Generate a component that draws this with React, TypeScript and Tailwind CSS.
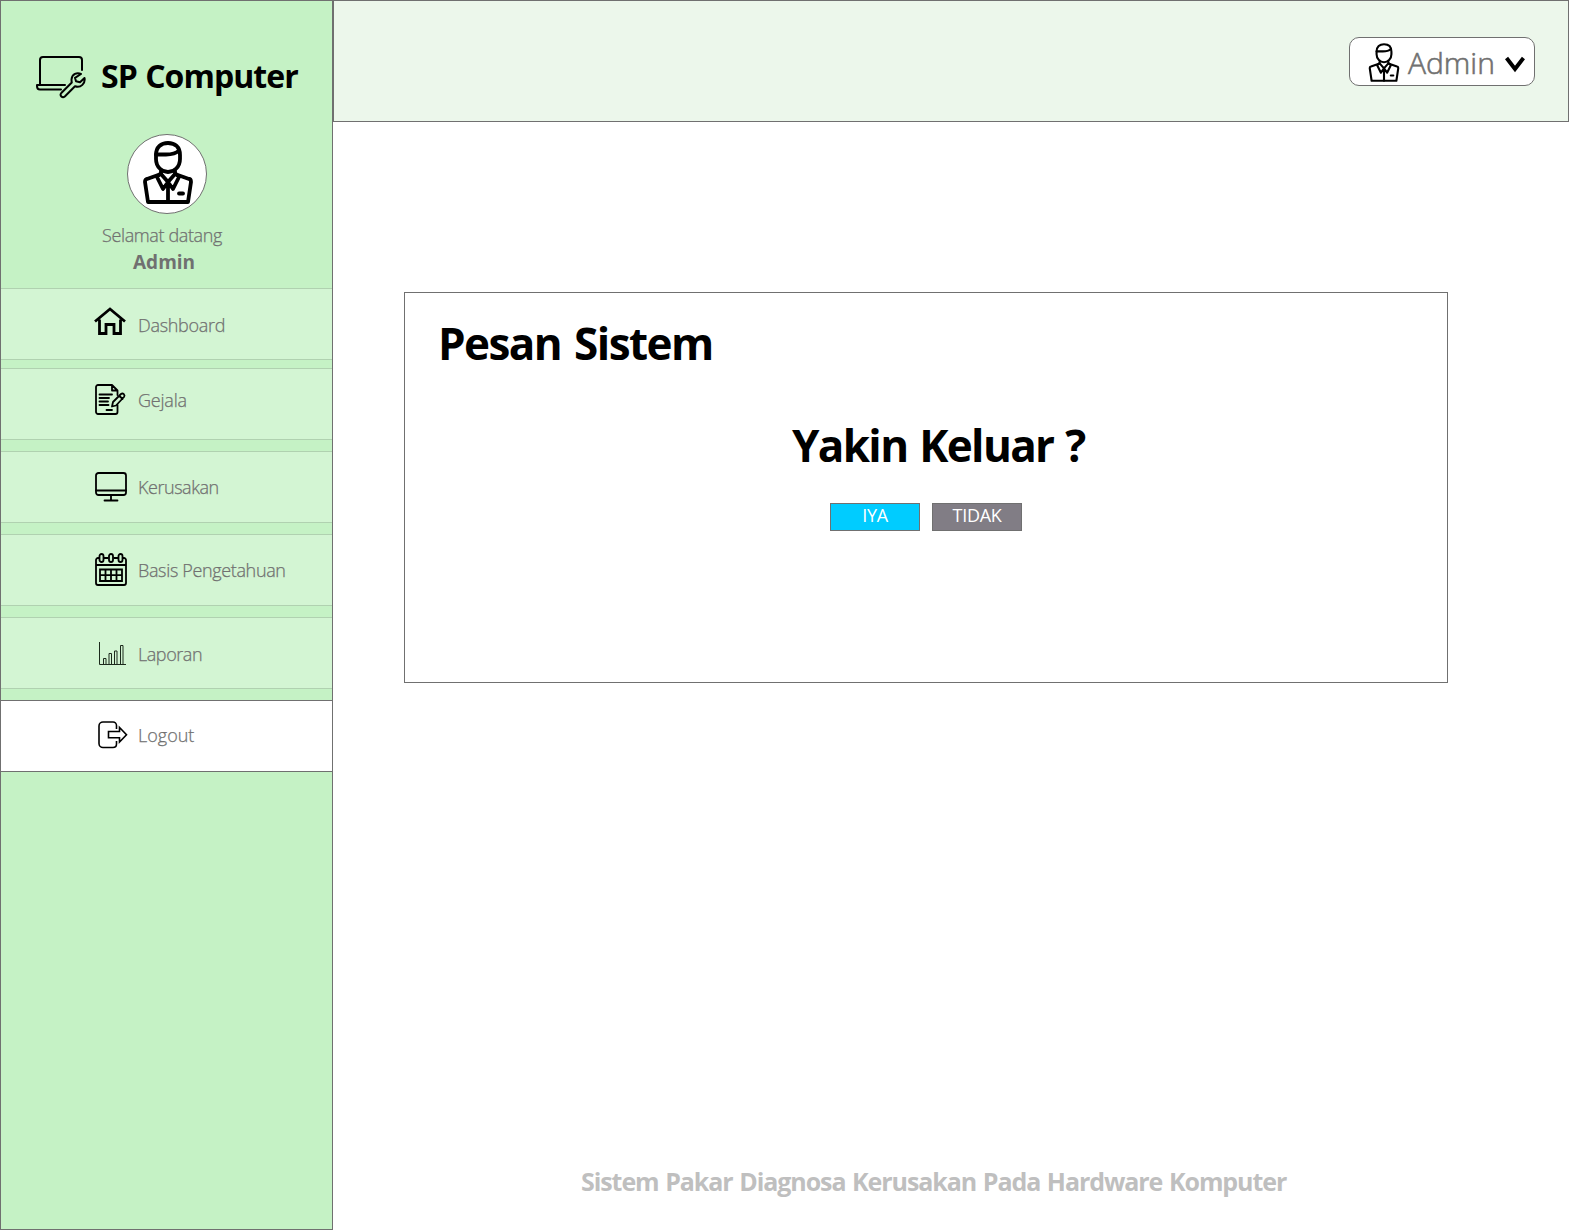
import React from "react";

const font = "font-['Open_Sans','Noto_Sans',sans-serif]";

function Person({ className, sw }: { className: string; sw: number }) {
  return (
    <svg viewBox="0 0 50 63" className={className} fill="none" stroke="#000" strokeWidth={sw} strokeLinejoin="round" strokeLinecap="round">
      <path d="M13 14C13 6 18 2 25 2s12 4 12 12v4c0 8-6 13-12 13S13 26 13 18z" />
      <path d="M13 13.500h10c6 0 10-1 13-4" />
      <path d="M18 30v3L4 38c-1 0-2 1-2 3l3 20h40l3-20c0-2-1-3-2-3l-14-5v-3" />
      <path d="M25 43v18M17 33l-3 3 6 12 5-7 5 7 6-12-3-3M18 33l7 8 7-8" />
      <path d="M36 52.500h4" />
    </svg>
  );
}

function Logo() {
  return (
    <svg viewBox="0 0 50 43" className="h-[43px] w-[50px] shrink-0" fill="none" stroke="#000" strokeWidth="2" strokeLinejoin="round" strokeLinecap="round">
      <path d="M4 28V4c0-2 1-3 3-3h36c2 0 3 1 3 3v10M29 29H1v1c0 2 1 3.500 3 3.500h21" />
      <path d="M45 18c-4-2-9 0-9.500 5.500 0 1 0 2 .3 3L25.300 37c-2 2.500 1 5.500 3.500 3.500L39 30.300c6 2 10.500-3 9.500-8.300l-4.500 4.300-4-1-1-3.500z" />
    </svg>
  );
}

function Home() {
  return (
    <svg viewBox="0 0 32 29" className="h-[29px] w-8" fill="none" stroke="#000" strokeWidth="2.8">
      <path d="M1 14.500 16 2l15 12.500M5.500 12.500v14h6.500V17.500h8v9h6.500v-14" />
    </svg>
  );
}

function Note() {
  return (
    <svg viewBox="0 0 32 32" className="size-8" fill="none" stroke="#000" strokeWidth="1.800" strokeLinejoin="round" strokeLinecap="round">
      <path d="M22.500 21v7c0 1-.8 2-2 2H3c-1 0-2-1-2-2V3c0-1 1-2 2-2h14l5.500 5.500V11M17 1v5.500h5.500M4.500 10.500H17M4.500 14H14M4.500 17.500H13M4.500 21h9M11.500 26h5.500" />
      <path d="M17 22.500l1-4.500 8-8c2-1.500 4.500 1 3 3l-8 8.500zM24.500 12l3 3" />
    </svg>
  );
}

function Monitor() {
  return (
    <svg viewBox="0 0 32 30" className="h-[30px] w-8" fill="none" stroke="#000" strokeWidth="1.800" strokeLinecap="round">
      <rect x="1" y="1" width="30" height="22" rx="2.500" />
      <path d="M1 18.500h30M16 23v5.500M9.500 28.500h13" />
    </svg>
  );
}

function Calendar() {
  return (
    <svg viewBox="0 0 32 33" className="h-[33px] w-8" fill="none" stroke="#000" strokeWidth="1.800">
      <path d="M4 5H3C2 5 1 6 1 7v23c0 1 1 2 2 2h26c1 0 2-1 2-2V7c0-1-1-2-2-2h-1M9 5h4.500M18.500 5H23M1 12h30" />
      <rect x="4.500" y="1" width="4" height="8" rx="2" />
      <rect x="14" y="1" width="4" height="8" rx="2" />
      <rect x="23.500" y="1" width="4" height="8" rx="2" />
      <path d="M5 16.500h22v11.500H5zM5 22.200h22M10.500 16.500V28M16 16.500V28M21.500 16.500V28" />
    </svg>
  );
}

function Chart() {
  return (
    <svg viewBox="0 0 27 24" className="h-6 w-[27px]" fill="none" stroke="#1c2a1c" strokeWidth="1">
      <path d="M.5 0v22.500H27" />
      <path d="M4.500 22.500v-6h2.500v6M10 22.500v-11h2.500v11M15.500 22.500V9h2.500v13.500M21.500 22.500v-19H24v19" />
    </svg>
  );
}

function Logout() {
  return (
    <svg viewBox="0 0 30 28" className="h-7 w-[30px]" fill="none" stroke="#000" strokeWidth="1.600" strokeLinejoin="miter">
      <path d="M18.500 8V4.500c0-2-1.500-3.500-3.500-3.500H5C3 1 1 2.500 1 5v17.500C1 25 3 26.500 5 26.500h10c2 0 3.500-1.500 3.500-3.500v-3" />
      <path d="M10.500 10.500h11V6.500l7 7.200-7 7.300v-4.300h-11z" />
    </svg>
  );
}

const items = [
  { label: "Dashboard", icon: <Home />, box: "mt-0", ic: "pl-[93px] pt-[18px]", tx: "pt-[23px] tracking-[-0.3px]" },
  { label: "Gejala", icon: <Note />, box: "mt-2", ic: "pl-[94px] pt-[15px]", tx: "pt-[18px] tracking-[-0.2px]" },
  { label: "Kerusakan", icon: <Monitor />, box: "mt-[11px]", ic: "pl-[94px] pt-[20px]", tx: "pt-[22px] tracking-[-0.45px]" },
  { label: "Basis Pengetahuan", icon: <Calendar />, box: "mt-[11px]", ic: "pl-[94px] pt-[18px]", tx: "pt-[22px] tracking-[-0.35px]" },
  { label: "Laporan", icon: <Chart />, box: "mt-[11px]", ic: "pl-[98px] pt-[24px]", tx: "pt-[23px] tracking-[-0.45px]" },
];

export default function App() {
  return (
    <div className={`flex h-[1230px] w-[1569px] overflow-hidden bg-white text-[#707070] ${font}`}>
      <aside className="flex w-[333px] shrink-0 flex-col border border-[#707070] bg-[#c5f2c5]">
        <div className="flex h-[133px] items-start pl-[35px] pt-[55px]">
          <Logo />
          <h1 className="ml-[15px] mt-[-2px] whitespace-nowrap text-[32px] leading-[44px] font-bold tracking-[-0.95px] text-black [word-spacing:1px]">SP Computer</h1>
        </div>
        <div className="ml-[126px] flex size-20 justify-center rounded-full border border-[#707070] bg-white pl-px pt-[6px]">
          <Person className="h-[63px] w-[50px]" sw={3.8} />
        </div>
        <p className="ml-[101px] mt-2 whitespace-nowrap text-[18px] leading-[26px] font-light tracking-[-0.38px] [-webkit-text-stroke:0.25px_#707070]">Selamat datang</p>
        <p className="ml-[132px] mt-px whitespace-nowrap text-[19px] leading-[26px] font-bold">Admin</p>
        <nav className="mt-[13px] flex flex-col">
          {items.map((i) => (
            <a key={i.label} className={`grid h-[72px] grid-cols-[137px_1fr] border-y border-[#b0d1b0] bg-[#d3f5d3] ${i.box}`}>
              <span className={i.ic}>{i.icon}</span>
              <span className={`whitespace-nowrap text-[18px] leading-[26px] font-light [-webkit-text-stroke:0.25px_#707070] ${i.tx}`}>{i.label}</span>
            </a>
          ))}
          <a className="mt-[11px] grid h-[72px] grid-cols-[137px_1fr] border-y border-[#707070] bg-white">
            <span className="pl-[97px] pt-[20px]"><Logout /></span>
            <span className="pt-[21px] text-[18px] leading-[26px] font-light [-webkit-text-stroke:0.25px_#707070]">Logout</span>
          </a>
        </nav>
      </aside>
      <div className="flex flex-1 flex-col">
        <header className="flex h-[122px] items-start justify-end border border-[#707070] bg-[#ecf7eb] pr-[33px] pt-9">
          <button className="flex h-[49px] w-[186px] items-start rounded-[10px] border border-[#707070] bg-white pl-[18px]">
            <Person className="mt-[5px] h-[39px] w-[32px]" sw={3.4} />
            <span className="ml-2 mt-[3px] text-[30px] leading-[44px] font-light [-webkit-text-stroke:0.6px_#707070]">Admin</span>
            <svg viewBox="0 0 20 17" className="ml-auto mr-[9px] mt-[18px] h-[17px] w-5"><path d="M1.500 2 10 13l8.500-11" fill="none" stroke="#000" strokeWidth="4" /></svg>
          </button>
        </header>
        <main className="flex flex-1 flex-col">
          <section className="ml-[71px] mt-[170px] flex h-[391px] w-[1044px] flex-col border border-[#707070]">
            <h2 className="ml-[33px] mt-[20px] whitespace-nowrap text-[44px] leading-[60px] font-bold tracking-[-1.55px] text-black [word-spacing:3px]">Pesan Sistem</h2>
            <h2 className="ml-[387px] mt-[42px] whitespace-nowrap text-[44px] leading-[60px] font-bold tracking-[-1.65px] text-black [word-spacing:2px]">Yakin Keluar ?</h2>
            <div className="ml-[425px] mt-[28px] flex gap-3 text-[18px] leading-[20px] tracking-[-0.3px] text-white">
              <button className="flex h-7 w-[90px] justify-center border border-[#707070] bg-[#00ccff] pt-px">IYA</button>
              <button className="flex h-7 w-[90px] justify-center border border-[#707070] bg-[#817d85] pt-px">TIDAK</button>
            </div>
          </section>
          <footer className="ml-[248px] mt-[480px] whitespace-nowrap text-[25px] leading-[36px] font-bold tracking-[-1.07px] text-[#bfbfbf] [word-spacing:1.2px]">Sistem Pakar Diagnosa Kerusakan Pada Hardware Komputer</footer>
        </main>
      </div>
    </div>
  );
}
